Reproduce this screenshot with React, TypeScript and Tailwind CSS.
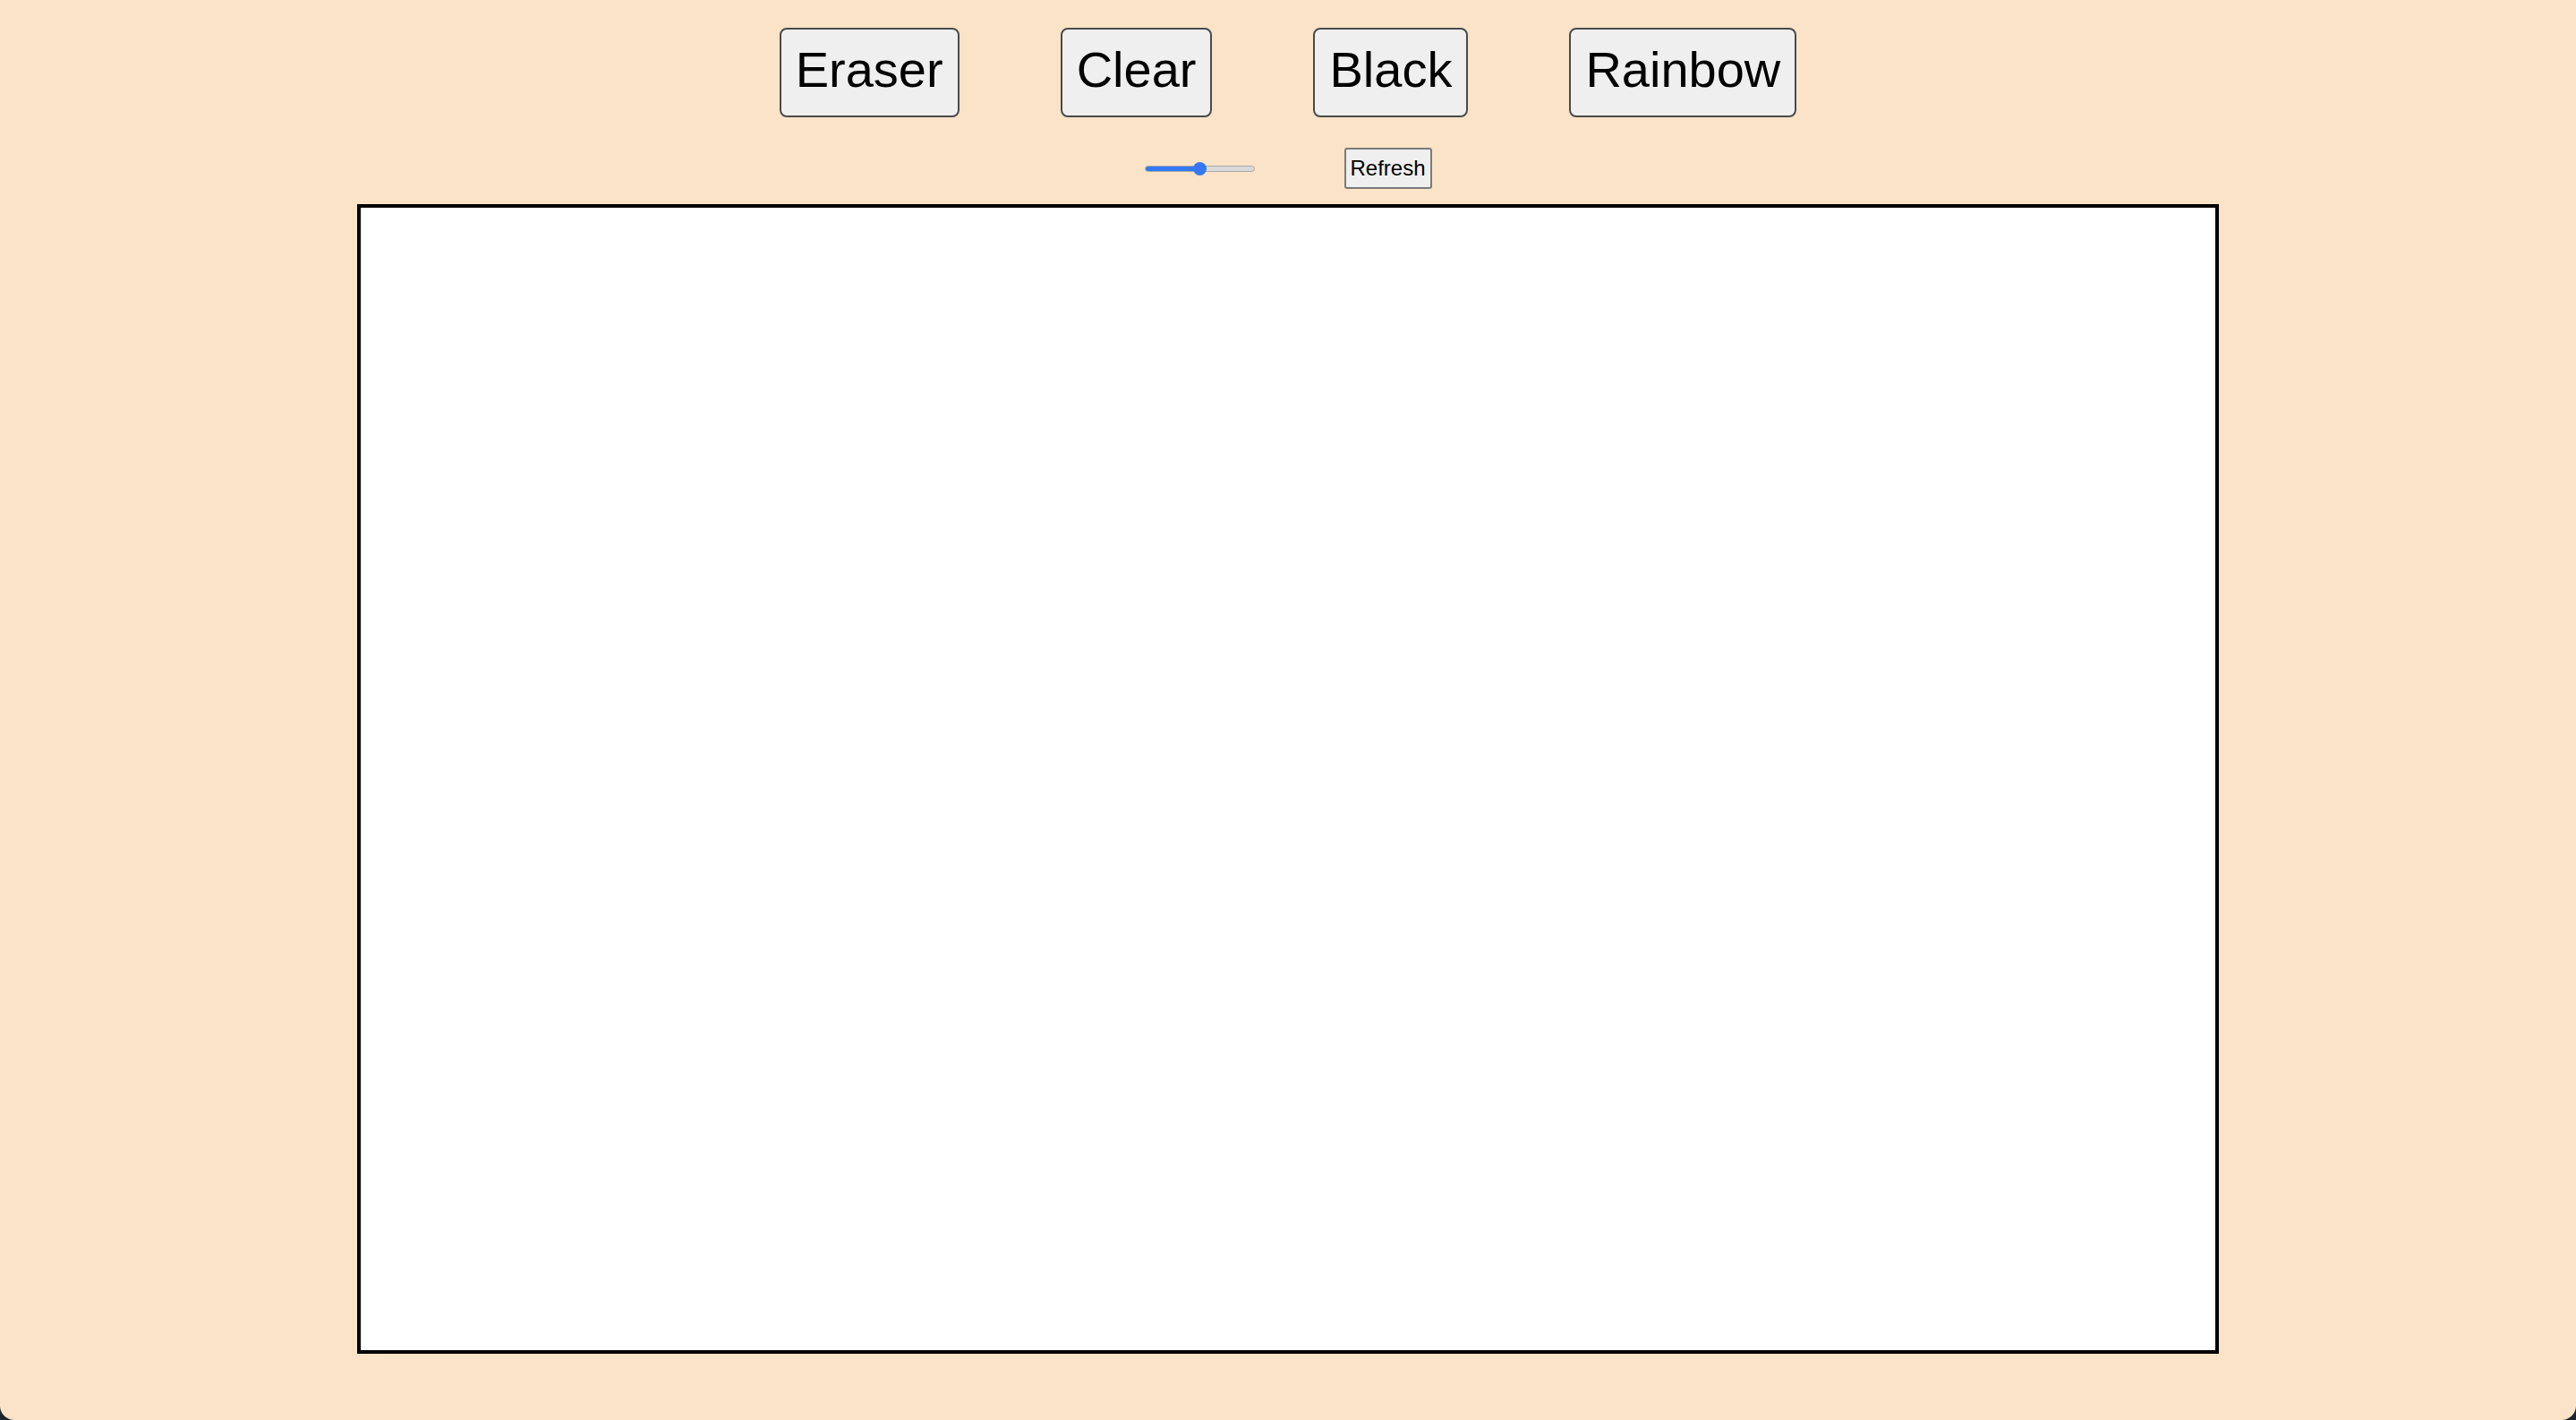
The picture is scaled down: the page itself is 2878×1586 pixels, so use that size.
import React, { useState } from 'react'

const tools = ['Eraser', 'Clear', 'Black', 'Rainbow']

const App = () => {
  const [size, setSize] = useState(50)

  return (
    <div className="min-h-screen bg-[#1b2631]">
      <div className="min-h-[1586px] bg-[#fbe3c8] rounded-b-[16px] font-['Liberation_Sans',Arial,sans-serif] text-black">
        <div className="flex justify-center gap-[113px] pt-[31px]">
          {tools.map((t) => (
            <button
              key={t}
              className="h-[100px] px-[16px] pb-[6px] flex items-center justify-center rounded-[8px] border-2 border-[#4a4a4a] bg-[#efefef] text-[56px] leading-none"
            >
              {t}
            </button>
          ))}
        </div>

        <div className="flex justify-center items-center gap-[100px] pt-[34px]">
          <input
            type="range"
            min={0}
            max={100}
            value={size}
            onChange={(e) => setSize(Number(e.target.value))}
            className="appearance-none w-[123px] h-[7px] rounded-full border border-[#a9a9a9] bg-[linear-gradient(to_right,#3478f6_50%,#d9d9d9_50%)] outline-none [&::-webkit-slider-thumb]:appearance-none [&::-webkit-slider-thumb]:w-[15px] [&::-webkit-slider-thumb]:h-[15px] [&::-webkit-slider-thumb]:rounded-full [&::-webkit-slider-thumb]:bg-[#3478f6] [&::-webkit-slider-thumb]:border-0"
          />
          <button className="h-[46px] w-[98px] flex items-center justify-center rounded-[3px] border-2 border-[#7a7a7a] bg-[#efefef] text-[24px] leading-none">
            Refresh
          </button>
        </div>

        <div className="mx-auto mt-[17px] w-[2080px] h-[1284px] border-4 border-black bg-white" />
      </div>
    </div>
  )
}

export default App
